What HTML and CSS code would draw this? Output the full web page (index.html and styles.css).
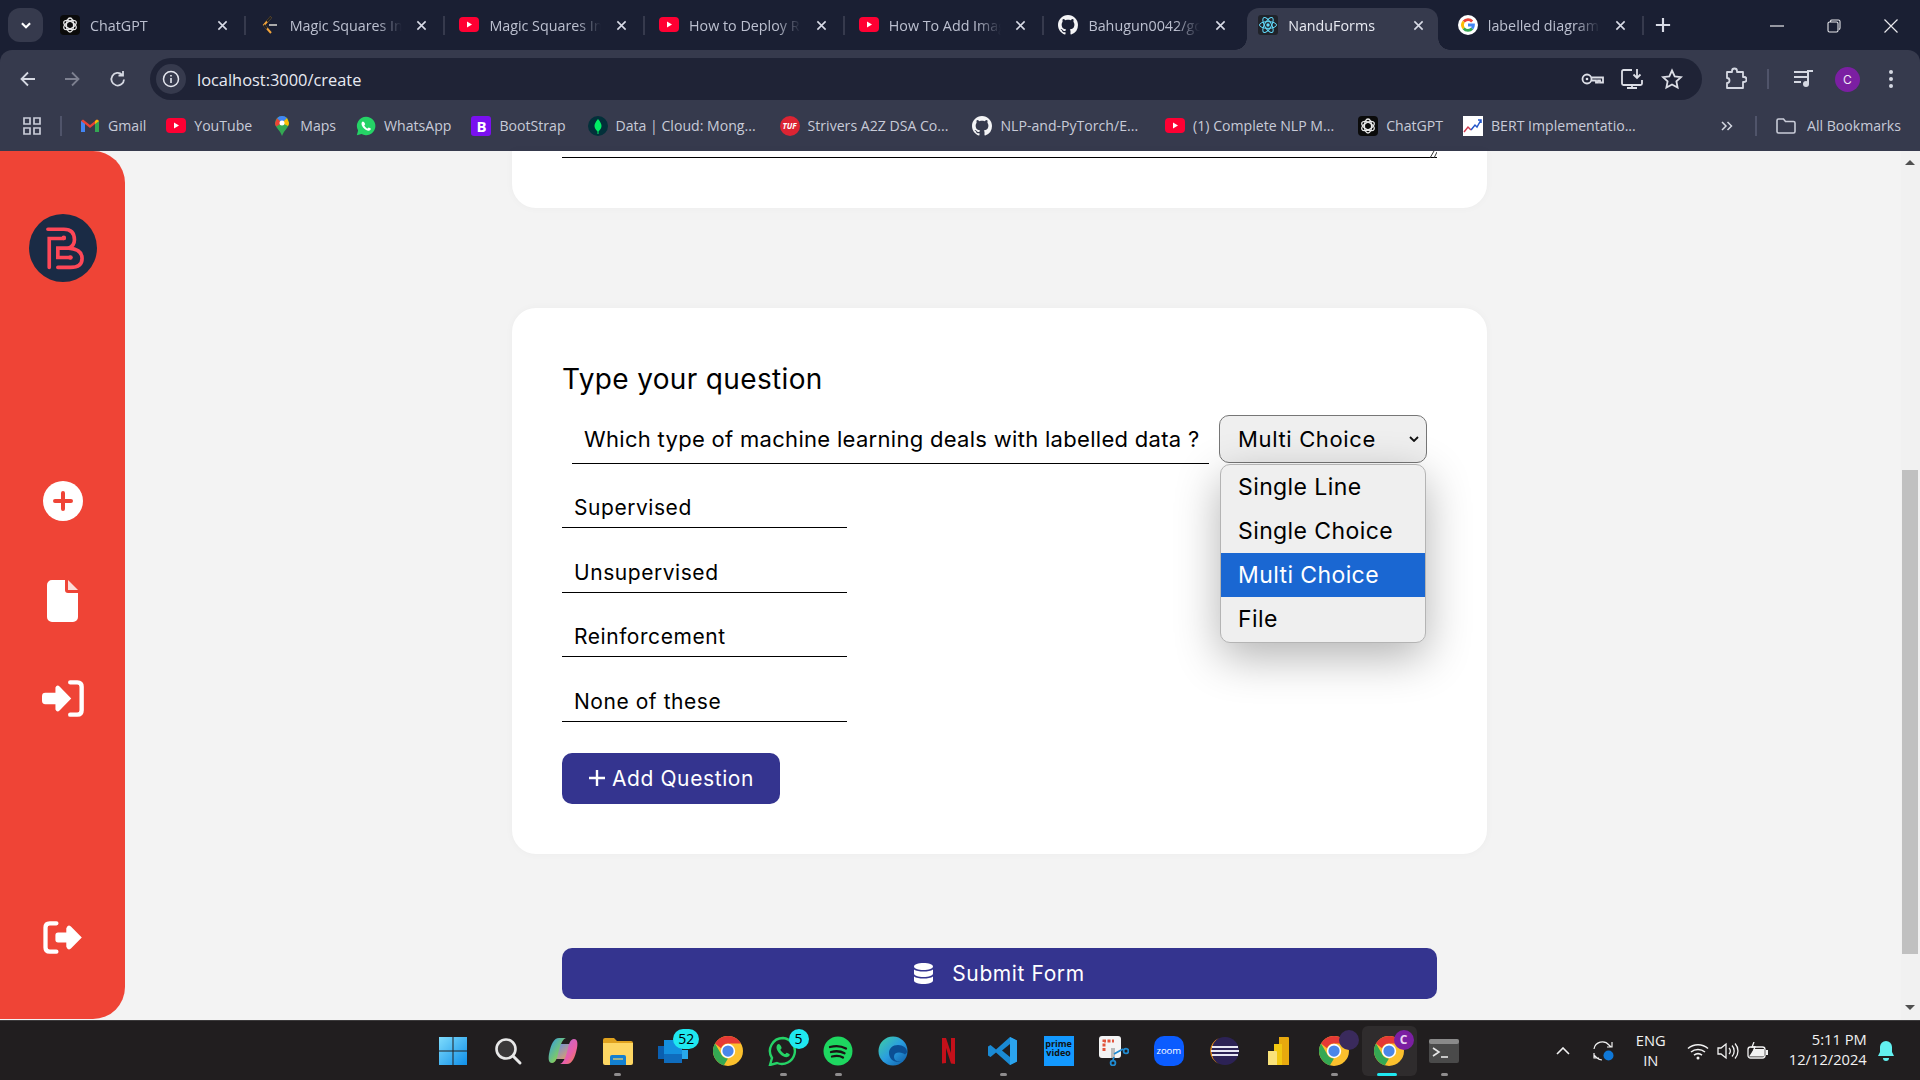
FILE: index.html
```html
<!DOCTYPE html>
<html lang="en">
<head>
    <meta charset="UTF-8">
    <meta name="viewport" content="width=device-width, initial-scale=1.0">
    <title>NanduForms</title>
    <link rel="stylesheet" href="styles.css">
</head>
<body>
    <svg class="defs" aria-hidden="true">
        <symbol id="gpt" viewBox="0 0 20 20">
            <rect width="20" height="20" rx="4" fill="#0b0b0b"/>
            <g fill="none" stroke="#e8e8e8" stroke-width="1.3">
                <ellipse cx="10" cy="10" rx="3.6" ry="7"/>
                <ellipse cx="10" cy="10" rx="3.6" ry="7" transform="rotate(60 10 10)"/>
                <ellipse cx="10" cy="10" rx="3.6" ry="7" transform="rotate(120 10 10)"/>
            </g>
        </symbol>
        <symbol id="leet" viewBox="0 0 20 20">
            <path d="M11 2 4 10l7 8" fill="none" stroke="#f2a33a" stroke-width="2"/>
            <path d="M11 2 7 6.500M4 10l3 3.500" fill="none" stroke="#222" stroke-width="2"/>
            <path d="M9 10h8" stroke="#aaa" stroke-width="2"/>
        </symbol>
        <symbol id="yt" viewBox="0 0 20 20">
            <rect y="2" width="20" height="15" rx="4" fill="#ff0033"/>
            <path d="M8 6.500v6l5-3z" fill="#fff"/>
        </symbol>
        <symbol id="gh" viewBox="0 0 16 16">
            <path fill="#f4f4f6" d="M8 0C3.58 0 0 3.58 0 8c0 3.54 2.29 6.530 5.470 7.590.4.070.55-.17.55-.38 0-.19-.01-.82-.01-1.490-2.010.37-2.530-.49-2.690-.94-.09-.23-.48-.94-.82-1.130-.28-.15-.68-.52-.01-.53.63-.01 1.080.58 1.230.82.72 1.210 1.870.87 2.330.66.07-.52.28-.87.51-1.070-1.780-.2-3.640-.89-3.640-3.950 0-.87.31-1.590.82-2.150-.08-.2-.36-1.020.08-2.120 0 0 .67-.21 2.200.82.64-.18 1.320-.27 2-.27s1.360.09 2 .27c1.530-1.040 2.200-.82 2.200-.82.44 1.100.16 1.920.08 2.120.51.56.82 1.270.82 2.150 0 3.070-1.870 3.750-3.650 3.950.29.25.54.73.54 1.480 0 1.070-.01 1.930-.01 2.200 0 .21.15.46.55.38A8.013 8.013 0 0 0 16 8c0-4.420-3.580-8-8-8z"/>
        </symbol>
        <symbol id="react" viewBox="0 0 20 20">
            <rect width="20" height="20" rx="3" fill="#20232a"/>
            <circle cx="10" cy="10" r="1.700" fill="#61dafb"/>
            <g fill="none" stroke="#61dafb" stroke-width="1">
                <ellipse cx="10" cy="10" rx="8.500" ry="3.400"/>
                <ellipse cx="10" cy="10" rx="8.500" ry="3.400" transform="rotate(60 10 10)"/>
                <ellipse cx="10" cy="10" rx="8.500" ry="3.400" transform="rotate(120 10 10)"/>
            </g>
        </symbol>
        <symbol id="google" viewBox="0 0 24 24">
            <circle cx="12" cy="12" r="12" fill="#fff"/>
            <g fill="none" stroke-width="3.400">
                <path stroke="#ea4335" d="M6.900 8A6.500 6.500 0 0 1 17 7.800"/>
                <path stroke="#fbbc05" d="M6.900 8a6.500 6.500 0 0 0 0 8"/>
                <path stroke="#34a853" d="M6.900 16A6.500 6.500 0 0 0 17 16.200"/>
                <path stroke="#4285f4" d="M17 16.200A6.500 6.500 0 0 0 18.500 12H12"/>
            </g>
        </symbol>
        <symbol id="chrome" viewBox="0 0 48 48">
            <circle cx="24" cy="24" r="24" fill="#fbc02d"/>
            <path fill="#e53935" d="M24 0a24 24 0 0 1 20.800 12H24a12 12 0 0 0-11.200 7.700L3.200 12A24 24 0 0 1 24 0z"/>
            <path fill="#34a853" d="M3.200 12l10.400 18a12 12 0 0 0 10.400 6l-6.800 11A24 24 0 0 1 3.200 12z"/>
            <circle cx="24" cy="24" r="11.500" fill="#fff"/>
            <circle cx="24" cy="24" r="9" fill="#4a86e8"/>
        </symbol>
        <symbol id="wa" viewBox="0 0 24 24">
            <path fill="#25d366" d="M12 1a11 11 0 0 0-9.500 16.500L1 23l5.700-1.500A11 11 0 1 0 12 1z"/>
            <path fill="#fff" d="M8.300 6.500c-.5 0-1.700 1-1.700 2.800 0 3.500 4.700 8.300 8.500 8.300 1.700 0 2.800-1.300 2.800-2.200 0-.4-2.300-1.600-2.700-1.600-.5 0-.9 1.200-1.400 1.200-.9 0-3.800-2.700-3.800-3.600 0-.5 1-1 1-1.400 0-.5-1.100-3.500-2.700-3.500z"/>
        </symbol>
        <symbol id="plus-mark" viewBox="0 0 18 18">
            <path d="M9 1v16M1 9h16" fill="none" stroke="currentColor" stroke-width="2.400"/>
        </symbol>
        <symbol id="x" viewBox="0 0 12 12">
            <path d="M1.500 1.500l9 9m0-9l-9 9" fill="none" stroke="currentColor" stroke-width="1.700"/>
        </symbol>
    </svg>

    <div class="tabstrip">
        <button class="tab-search"><svg viewBox="0 0 12 12"><path d="M2.500 4.500 6 8l3.500-3.500" fill="none" stroke="#fff" stroke-width="1.800"/></svg></button>
        <div class="tab"><svg class="fav"><use href="#gpt"/></svg><span class="tab-title">ChatGPT</span><svg class="tab-x"><use href="#x"/></svg></div>
        <div class="tab"><svg class="fav"><use href="#leet"/></svg><span class="tab-title">Magic Squares In</span><svg class="tab-x"><use href="#x"/></svg></div>
        <div class="tab"><svg class="fav"><use href="#yt"/></svg><span class="tab-title">Magic Squares In</span><svg class="tab-x"><use href="#x"/></svg></div>
        <div class="tab"><svg class="fav"><use href="#yt"/></svg><span class="tab-title">How to Deploy R</span><svg class="tab-x"><use href="#x"/></svg></div>
        <div class="tab"><svg class="fav"><use href="#yt"/></svg><span class="tab-title">How To Add Image</span><svg class="tab-x"><use href="#x"/></svg></div>
        <div class="tab no-sep"><svg class="fav"><use href="#gh"/></svg><span class="tab-title">Bahugun0042/gc</span><svg class="tab-x"><use href="#x"/></svg></div>
        <div class="tab active"><svg class="fav"><use href="#react"/></svg><span class="tab-title">NanduForms</span><svg class="tab-x"><use href="#x"/></svg></div>
        <div class="tab"><svg class="fav"><use href="#google"/></svg><span class="tab-title">labelled diagram</span><svg class="tab-x"><use href="#x"/></svg></div>
        <svg class="new-tab"><use href="#plus-mark"/></svg>
        <div class="win-btns">
            <svg viewBox="0 0 14 14"><path d="M0 7h14" stroke="#e8e8ec" stroke-width="1.200"/></svg>
            <svg viewBox="0 0 14 14"><path d="M3.500 2.500V2a1.500 1.500 0 0 1 1.500-1h6.500A1.500 1.500 0 0 1 13 2.500V9a1.500 1.500 0 0 1-1 1.400M2.500 3h7A1.500 1.500 0 0 1 11 4.500v7A1.500 1.500 0 0 1 9.500 13h-7A1.500 1.500 0 0 1 1 11.500v-7A1.500 1.500 0 0 1 2.500 3z" fill="none" stroke="#e8e8ec" stroke-width="1.100"/></svg>
            <svg viewBox="0 0 14 14"><path d="M.5.500l13 13m0-13l-13 13" stroke="#e8e8ec" stroke-width="1.200"/></svg>
        </div>
    </div>

    <div class="toolbar">
        <svg class="nav-ico" viewBox="0 0 20 20"><path d="M17 10H4m6-6.500L3.500 10l6.500 6.500" fill="none" stroke="#d5d8e2" stroke-width="1.800"/></svg>
        <svg class="nav-ico" viewBox="0 0 20 20"><path d="M3 10h13M10 3.500l6.500 6.500-6.500 6.500" fill="none" stroke="#7d8090" stroke-width="1.800"/></svg>
        <svg class="nav-ico reload" viewBox="0 0 20 20"><path d="M16 10.500a6.300 6.300 0 1 1-1.800-4.700M15 2v4.500h-4.500" fill="none" stroke="#d5d8e2" stroke-width="1.800"/></svg>
        <div class="omnibox">
            <span class="site-chip"><svg viewBox="0 0 18 18"><circle cx="9" cy="9" r="7.500" fill="none" stroke="#e4e6ee" stroke-width="1.500"/><path d="M9 8v5M9 5v1.600" stroke="#e4e6ee" stroke-width="1.600"/></svg></span>
            <span class="url">localhost:3000/create</span>
            <span class="omni-right">
                <svg class="omni-ico" viewBox="0 0 24 24"><circle cx="7" cy="12" r="4.500" fill="none" stroke="#dcdee6" stroke-width="1.800"/><circle cx="7" cy="12" r="1.300" fill="#dcdee6"/><path d="M11.500 10.500H23v5h-3v-2h-2v2h-2v-2h-4.500" fill="none" stroke="#dcdee6" stroke-width="1.800"/></svg>
                <svg class="omni-ico" viewBox="0 0 24 24"><path d="M12 3H3.500A1.500 1.500 0 0 0 2 4.500v12A1.500 1.500 0 0 0 3.500 18h17a1.500 1.500 0 0 0 1.500-1.500V13M7 21h10M12 18v3" fill="none" stroke="#dcdee6" stroke-width="1.800"/><path d="M17 2v9m-3.500-3.500L17 11l3.500-3.500" fill="none" stroke="#dcdee6" stroke-width="1.800"/></svg>
                <svg class="omni-ico" viewBox="0 0 24 24"><path d="M12 3.500l2.700 5.800 6.300.8-4.600 4.300 1.200 6.200L12 17.500l-5.600 3.100 1.200-6.200L3 10.100l6.300-.8z" fill="none" stroke="#dcdee6" stroke-width="1.800"/></svg>
            </span>
        </div>
        <svg class="ext-ico" viewBox="0 0 24 24"><path d="M4 5h5V4a2.500 2.500 0 0 1 5 0v1h6v5h1a2.500 2.500 0 0 1 0 5h-1v6H4v-5a2.500 2.500 0 0 0 0-5z" fill="none" stroke="#d5d8e2" stroke-width="1.800" stroke-linejoin="round"/></svg>
        <span class="tool-sep"></span>
        <svg class="media-ico" viewBox="0 0 22 20"><path d="M1 4h13M1 9h13M1 14h7" stroke="#d5d8e2" stroke-width="2"/><path d="M15 16V3h5" fill="none" stroke="#d5d8e2" stroke-width="2"/><circle cx="13" cy="16" r="3" fill="#d5d8e2"/></svg>
        <span class="avatar">C</span>
        <svg class="kebab" viewBox="0 0 6 20"><circle cx="3" cy="3" r="2" fill="#d5d8e2"/><circle cx="3" cy="10" r="2" fill="#d5d8e2"/><circle cx="3" cy="17" r="2" fill="#d5d8e2"/></svg>
    </div>

    <div class="bookmarks">
        <svg class="apps" viewBox="0 0 18 18"><path d="M1 1h6v6H1zM11 1h6v6h-6zM1 11h6v6H1zM11 11h6v6h-6z" fill="none" stroke="#c9ccd8" stroke-width="1.700"/></svg>
        <span class="bm-sep"></span>
        <div class="bm-list">
            <span class="bm"><svg class="fav" viewBox="0 0 20 20"><path d="M1 5v11h4V8l5 4 5-4v8h4V5l-2-1.500L10 9 3 3.500z" fill="#ea4335"/><path d="M1 5v11h4V8z" fill="#4285f4"/><path d="M15 8v8h4V5z" fill="#34a853"/><path d="M19 5l-2-1.500L15 5v3z" fill="#fbbc05"/></svg>Gmail</span>
            <span class="bm"><svg class="fav"><use href="#yt"/></svg>YouTube</span>
            <span class="bm"><svg class="fav" viewBox="0 0 20 20"><path d="M10 0a7 7 0 0 0-7 7c0 4.500 5 7 7 13 2-6 7-8.500 7-13a7 7 0 0 0-7-7z" fill="#34a853"/><path d="M5 2.200A7 7 0 0 1 15 2L10 7z" fill="#4285f4"/><path d="M5 2.200 3 7c0 1.500.5 2.500 1.200 3.500L10 7z" fill="#ea4335"/><path d="M15 2l2 5c0 1-.4 2-1 3L10 7z" fill="#fbbc05"/><circle cx="10" cy="7" r="2.500" fill="#fff"/></svg>Maps</span>
            <span class="bm"><svg class="fav"><use href="#wa"/></svg>WhatsApp</span>
            <span class="bm"><span class="bs-ico">B</span>BootStrap</span>
            <span class="bm bm-gap-s"><svg class="fav" viewBox="0 0 20 20"><circle cx="10" cy="10" r="10" fill="#02303a"/><path d="M10 3c2.500 3 3.500 5 3.500 7S12 14 10.500 15.500V18h-1v-2.500C8 14 6.500 12 6.500 10S7.500 6 10 3z" fill="#00ed64"/></svg>Data | Cloud: Mong...</span>
            <span class="bm bm-gap-m"><span class="tuf-ico">TUF</span>Strivers A2Z DSA Co...</span>
            <span class="bm bm-gap-m"><svg class="fav"><use href="#gh"/></svg>NLP-and-PyTorch/E...</span>
            <span class="bm bm-gap-l"><svg class="fav"><use href="#yt"/></svg>(1) Complete NLP M...</span>
            <span class="bm bm-gap-m"><svg class="fav"><use href="#gpt"/></svg>ChatGPT</span>
            <span class="bm"><svg class="fav" viewBox="0 0 20 20"><rect width="20" height="20" fill="#fff"/><path d="M1 16l4-5 3 3" fill="none" stroke="#d23c4f" stroke-width="1.500"/><path d="M8 14l4-5 2 2 4-7m-3 0h3v3" fill="none" stroke="#2456c8" stroke-width="1.500"/></svg>BERT Implementatio...</span>
        </div>
        <svg class="bm-more" viewBox="0 0 12 10"><path d="M1 1l4 4-4 4M6.500 1l4 4-4 4" fill="none" stroke="#d5d8e2" stroke-width="1.500"/></svg>
        <span class="bm-sep sep-right"></span>
        <span class="bm all-bm"><svg class="fav" viewBox="0 0 20 16"><path d="M1 2.500A1.500 1.500 0 0 1 2.500 1h5l2 2.500h8A1.500 1.500 0 0 1 19 5v8.500a1.500 1.500 0 0 1-1.500 1.500h-15A1.500 1.500 0 0 1 1 13.500z" fill="none" stroke="#c9ccd8" stroke-width="1.600"/></svg>All Bookmarks</span>
    </div>

    <div class="app">
        <aside class="sidebar">
            <svg class="logo" viewBox="85 194 205 205">
                <circle cx="187.500" cy="296.500" r="102.500" fill="#1a2b45"/>
                <g fill="none" stroke="#ff4757" stroke-width="11" stroke-linecap="round">
                    <path d="M142 240H190Q222 240 222 272Q222 290 205 297H172V325H210"/>
                    <path d="M205 297Q245 300 245 328Q245 355 210 355H172"/>
                    <path d="M146 355V268H190"/>
                </g>
                <circle cx="190" cy="266" r="7" fill="#ff4757"/>
                <circle cx="210" cy="325" r="7" fill="#ff4757"/>
            </svg>
            <svg class="side-plus" viewBox="0 0 40 40"><circle cx="20" cy="20" r="20" fill="#fff"/><path d="M20 12v16M12 20h16" stroke="#ef4436" stroke-width="4" stroke-linecap="round"/></svg>
            <svg class="side-file" viewBox="0 0 31 42"><path d="M5 0H18V10a3 3 0 0 0 3 3H31V37a5 5 0 0 1-5 5H5a5 5 0 0 1-5-5V5a5 5 0 0 1 5-5Z" fill="#fff"/><path d="M21 0 31 10H21Z" fill="#fbdcd8"/></svg>
            <svg class="side-in" viewBox="125 360 125 110"><path d="M135 398H165V382Q170 372 178 380L212 415L178 450Q170 458 165 448V432H135Q125 432 125 422V408Q125 398 135 398Z" fill="#fff"/><path d="M209 367H230Q243 367 243 380V450Q243 463 230 463H209" fill="none" stroke="#fff" stroke-width="13" stroke-linecap="round"/></svg>
            <svg class="side-out" viewBox="130 1083 117 100"><path d="M170 1090H150Q137 1090 137 1103V1163Q137 1176 150 1176H170" fill="none" stroke="#fff" stroke-width="13" stroke-linecap="round"/><path d="M175 1118H200V1105Q205 1092 214 1100L247 1133L214 1166Q205 1174 200 1161V1148H175Q167 1148 167 1140V1126Q167 1118 175 1118Z" fill="#fff"/></svg>
        </aside>

        <main class="content">
            <section class="card card-cut">
                <div class="cut-line"><svg class="grip" viewBox="0 0 10 7"><path d="M3 7l4-7M7 7l3-6" stroke="#333" stroke-width="1"/></svg></div>
            </section>

            <section class="card question-card">
                <h2>Type your question</h2>
                <div class="question-row">
                    <input class="question-input" type="text" value="Which type of machine learning deals with labelled data ?">
                    <div class="type-wrap">
                        <select class="type-select">
                            <option selected>Multi Choice</option>
                        </select>
                        <svg class="type-chev" viewBox="0 0 10 6"><path d="M1 1l4 4 4-4" fill="none" stroke="#111" stroke-width="1.800"/></svg>
                        <ul class="type-menu">
                            <li>Single Line</li>
                            <li>Single Choice</li>
                            <li class="picked">Multi Choice</li>
                            <li>File</li>
                        </ul>
                    </div>
                </div>
                <div class="options">
                    <input class="option-input" type="text" value="Supervised">
                    <input class="option-input" type="text" value="Unsupervised">
                    <input class="option-input" type="text" value="Reinforcement">
                    <input class="option-input" type="text" value="None of these">
                </div>
                <button class="btn add-btn" type="button"><svg class="btn-plus"><use href="#plus-mark"/></svg>Add Question</button>
            </section>

            <button class="btn submit-btn" type="button">
                <svg class="db-ico" viewBox="0 0 19 21"><path d="M0 3.500C0 1.500 4.300 0 9.500 0S19 1.500 19 3.500 14.700 7 9.500 7 0 5.500 0 3.500zM0 6.500C2 8 5.500 8.600 9.500 8.600S17 8 19 6.500v4C19 12.500 14.700 14 9.500 14S0 12.500 0 10.500zM0 13.500c2 1.500 5.500 2.100 9.500 2.100s7.500-.6 9.500-2.100v4c0 2-4.300 3.500-9.500 3.500S0 19.500 0 17.500z" fill="#fff"/></svg>
                Submit Form
            </button>
        </main>

        <div class="scrollbar">
            <svg class="sb-arrow" viewBox="0 0 10 5"><path d="M0 5 5 0l5 5z" fill="#505050"/></svg>
            <div class="sb-thumb"></div>
            <svg class="sb-arrow" viewBox="0 0 10 5"><path d="M0 0h10L5 5z" fill="#505050"/></svg>
        </div>
    </div>

    <footer class="taskbar">
        <div class="task-icons">
            <span class="task"><svg viewBox="0 0 30 30"><defs><linearGradient id="win" x1="0" y1="0" x2="1" y2="1"><stop offset="0" stop-color="#7fdcfc"/><stop offset="1" stop-color="#0f8fe8"/></linearGradient></defs><path fill="url(#win)" d="M1 1h13.500v13.500H1zM15.500 1H29v13.500H15.500zM1 15.500h13.500V29H1zM15.500 15.500H29V29H15.500z"/></svg></span>
            <span class="task"><svg viewBox="0 0 30 30"><circle cx="13" cy="13" r="9.500" fill="#3a3839" stroke="#e8e8e8" stroke-width="2.600"/><path d="M20 20l7 7" stroke="#e8e8e8" stroke-width="3" stroke-linecap="round"/></svg></span>
            <span class="task"><svg viewBox="0 0 30 30"><defs><linearGradient id="cop-a" x1="0" y1="0" x2="1" y2="1"><stop offset="0" stop-color="#2d9bea"/><stop offset=".6" stop-color="#7cc96a"/><stop offset="1" stop-color="#f2c53c"/></linearGradient><linearGradient id="cop-b" x1="0" y1="0" x2="1" y2="1"><stop offset="0" stop-color="#b06be0"/><stop offset=".6" stop-color="#e85fa8"/><stop offset="1" stop-color="#f2853c"/></linearGradient><linearGradient id="cop-c" x1="0" y1="0" x2="1" y2="1"><stop offset="0" stop-color="#5a8fe8"/><stop offset="1" stop-color="#f0a05a"/></linearGradient></defs><path fill="url(#cop-c)" d="M9 8h14l-3 15H6z"/><path fill="url(#cop-a)" d="M11 2h7c-3 1-5 5-7 12-2 8-3 13-7 13-3 0-4-3-3-9C3 8 6 2 11 2z"/><path fill="url(#cop-b)" d="M19 28h-7c3-1 5-5 7-12 2-8 3-13 7-13 3 0 4 3 3 9-2 10-5 16-10 16z"/></svg></span>
            <span class="task dot"><svg viewBox="0 0 30 30"><path d="M0 4a2 2 0 0 1 2-2h9l3 3h14a2 2 0 0 1 2 2v5H0z" fill="#e0a21e"/><path d="M0 7h30v20a2 2 0 0 1-2 2H2a2 2 0 0 1-2-2z" fill="#fdd663"/><path d="M9 19h12a2 2 0 0 1 2 2v8H7v-8a2 2 0 0 1 2-2z" fill="#1380d0"/><path d="M10 23h10" stroke="#fdd663" stroke-width="1.200"/></svg></span>
            <span class="task"><svg viewBox="0 0 30 30"><path d="M0 10h6v13H0z" fill="#0a5fb0"/><path d="M6 4h18v23H6z" fill="#1490df"/><path d="M6 18h18v9H6z" fill="#0f6cbd"/><path d="M24 14h6v9h-6z" fill="#28a8ea"/></svg><span class="task-badge wide">52</span></span>
            <span class="task"><svg viewBox="0 0 30 30"><use href="#chrome"/></svg></span>
            <span class="task dot"><svg viewBox="0 0 30 30"><path d="M15 2A13 13 0 0 0 4 22L2 29l7-2A13 13 0 1 0 15 2z" fill="none" stroke="#25d366" stroke-width="2.400"/><path fill="#25d366" d="M10.500 8c-.6 0-2 1.200-2 3.300 0 4.200 5.600 9.900 10.100 9.900 2 0 3.300-1.500 3.300-2.600 0-.5-2.700-1.900-3.200-1.900-.6 0-1.100 1.400-1.700 1.400-1.100 0-4.500-3.200-4.500-4.300 0-.6 1.200-1.200 1.200-1.700C13.700 11.600 12.400 8 10.500 8z"/></svg><span class="task-badge">5</span></span>
            <span class="task dot"><svg viewBox="0 0 30 30"><circle cx="15" cy="15" r="14.500" fill="#1ed760"/><path d="M7 11c6-1.700 11-1.300 16 1.500M8 16c5-1.300 9.500-1 13.500 1.300M9 20.500c4-1 8-.8 11 1" fill="none" stroke="#191414" stroke-width="2.300" stroke-linecap="round"/></svg></span>
            <span class="task"><svg viewBox="0 0 30 30"><defs><linearGradient id="edge" x1="0" y1="0" x2="1" y2="1"><stop offset="0" stop-color="#3fd0a0"/><stop offset=".5" stop-color="#2a9de0"/><stop offset="1" stop-color="#0c59a4"/></linearGradient></defs><circle cx="15" cy="15" r="14.500" fill="url(#edge)"/><path d="M29 16c0-4-4-7-9-7-5.500 0-9 3.500-9 8 0 5 4 9 9 9 1 0 2 0 3-.5-2 .5-7 0-7-5 0-2.500 2-4 5-4s5 1 6 2c1-1 2-2 2-2.500z" fill="#0b4f94"/></svg></span>
            <span class="task"><svg viewBox="0 0 30 30"><path d="M9 2h4l5 15V2h4v26l-4-.5L13 12v15l-4 .5z" fill="#c4101a"/></svg></span>
            <span class="task dot"><svg viewBox="0 0 30 30"><path d="M22 1l7 3.500v21L22 29 8 16.500 2.500 21 0 19.500V10.500L2.500 9 8 13.500z" fill="#1a8ad4"/><path d="M22 8l-8 6.500L22 21z" fill="#211e1f"/><path d="M22 1l7 3.500v21L22 29z" fill="#2ba4ee"/></svg></span>
            <span class="task"><span class="prime">prime<br>video</span></span>
            <span class="task"><svg viewBox="0 0 30 30"><rect width="22" height="22" rx="3" fill="#f4f4f4"/><path d="M5 15V5h10" fill="none" stroke="#e2553d" stroke-width="3" stroke-dasharray="3 1.500"/><rect x="12" y="12" width="4" height="10" fill="#bbb"/><path d="M15 18l9-5M15 21l-1 3" stroke="#1f8ad0" stroke-width="1.800"/><circle cx="27" cy="15" r="2.400" fill="none" stroke="#1f8ad0" stroke-width="1.800"/><circle cx="14" cy="27" r="2.400" fill="none" stroke="#1f8ad0" stroke-width="1.800"/></svg></span>
            <span class="task"><span class="zoom-ico">zoom</span></span>
            <span class="task"><svg viewBox="0 0 30 30"><circle cx="16" cy="15" r="14" fill="#2c2255"/><path d="M10 2A14 14 0 0 0 10 28 15 15 0 0 1 10 2z" fill="#f7941e"/><path d="M3 11h26M2 15h28M3 19h26" stroke="#e8e8f4" stroke-width="1.800"/></svg></span>
            <span class="task"><svg viewBox="0 0 30 30"><path d="M15 1h9a1 1 0 0 1 1 1v27H15z" fill="#e8a90e"/><path d="M10 8h8v21h-8z" fill="#f2c811"/><path d="M4 15h8a1 1 0 0 1 1 1v13H4z" fill="#f9e27a"/></svg></span>
            <span class="task dot"><svg viewBox="0 0 30 30"><use href="#chrome"/></svg><span class="task-blob"></span></span>
            <span class="task current"><svg viewBox="0 0 30 30"><use href="#chrome"/></svg><span class="task-avatar">C</span></span>
            <span class="task dot"><svg viewBox="0 0 30 24"><rect width="30" height="24" rx="2" fill="#4a4a4a"/><rect width="30" height="5" rx="2" fill="#8a8a8a"/><path d="M4 9l6 4-6 4" fill="none" stroke="#e6e6e6" stroke-width="1.600"/><path d="M12 18h7" stroke="#e6e6e6" stroke-width="1.600"/></svg></span>
        </div>
        <div class="tray">
            <svg class="tray-chev" viewBox="0 0 14 8"><path d="M1 7l6-6 6 6" fill="none" stroke="#f2f2f2" stroke-width="1.600"/></svg>
            <span class="tray-sync"><svg viewBox="0 0 22 22"><path d="M1 9a8.500 8.500 0 0 1 15-4l2 2m1-5v5h-5M20 14M1 15l3 3a8 8 0 0 0 5 2M1 13v5h5" fill="none" stroke="#f0f0f0" stroke-width="1.200"/><circle cx="15.500" cy="15.500" r="5" fill="#0f78d8"/></svg></span>
            <span class="lang">ENG<br>IN</span>
            <svg class="tray-wifi" viewBox="0 0 22 18"><path d="M1 6.500c5.500-5 14.500-5 20 0M4 10c4-3.500 10-3.500 14 0M7 13.200c2.300-1.800 5.700-1.800 8 0" fill="none" stroke="#f2f2f2" stroke-width="1.500"/><circle cx="11" cy="16" r="1.500" fill="#f2f2f2"/></svg>
            <svg class="tray-vol" viewBox="0 0 22 18"><path d="M1 6v6h3l5 4V2L4 6z" fill="none" stroke="#f2f2f2" stroke-width="1.300"/><path d="M12 6a4 4 0 0 1 0 6M15 3.500a8 8 0 0 1 0 11M18 1.500a11 11 0 0 1 0 15" fill="none" stroke="#f2f2f2" stroke-width="1.300"/></svg>
            <svg class="tray-bat" viewBox="0 0 22 18"><rect x="1" y="5" width="17" height="11" rx="2.500" fill="none" stroke="#f2f2f2" stroke-width="1.300"/><path d="M2 14.500l5-7.500h10v7.500z" fill="#f2f2f2"/><path d="M19 8h2v5h-2z" fill="#f2f2f2"/><path d="M7 0l-2 5h3L6 10" fill="none" stroke="#f2f2f2" stroke-width="1.300"/></svg>
            <span class="clock">5:11 PM<br>12/12/2024</span>
            <svg class="tray-bell" viewBox="0 0 16 20"><path d="M8 0a6 6 0 0 0-6 6v5l-2 4h16l-2-4V6a6 6 0 0 0-6-6z" fill="#62f0f0"/><path d="M5 17h6a3 3 0 0 1-6 0z" fill="#62f0f0"/></svg>
        </div>
    </footer>
</body>
</html>
```

FILE: styles.css
```css
* {
    box-sizing: border-box;
}
body {
    margin: 0;
    width: 1920px;
    height: 1080px;
    overflow: hidden;
    display: flex;
    flex-direction: column;
    background-color: #1a1f33;
    font-family: Inter, "Liberation Sans", sans-serif;
}
.defs {
    display: none;
}

/* tab strip */
.tabstrip {
    height: 50px;
    flex: none;
    display: flex;
    align-items: flex-end;
    padding-left: 8px;
    background-color: #1a1f33;
    font-family: "Open Sans", sans-serif;
}
.tab-search {
    width: 35px;
    height: 34px;
    margin: 0 3px 8px 0;
    padding: 0;
    border: none;
    border-radius: 12px;
    background-color: #363a4d;
}
.tab-search svg {
    display: block;
    width: 14px;
    height: 14px;
    margin: auto;
}
.tab {
    position: relative;
    width: 199.7px;
    height: 42px;
    flex: none;
    display: flex;
    align-items: center;
    padding: 0 18px 8px 14px;
    color: #bcc0d0;
    font-size: 14.3px;
}
.tab::before {
    content: "";
    position: absolute;
    right: 0;
    top: 8px;
    height: 19px;
    width: 2px;
    background-color: #363a4d;
}
.tab.no-sep::before {
    display: none;
}
.tab.active {
    width: 191px;
    margin: 0 5.7px 0 3px;
    padding-left: 11px;
    padding-right: 14px;
    border-radius: 12px 12px 0 0;
    background-color: #363a4d;
    color: #e8eaf2;
}
.tab.active::before,
.tab.active::after {
    content: "";
    position: absolute;
    top: auto;
    bottom: 0;
    width: 12px;
    height: 12px;
}
.tab.active::before {
    left: -12px;
    right: auto;
    background: radial-gradient(circle at 0 0, transparent 11.5px, #363a4d 12px);
}
.tab.active::after {
    right: -12px;
    background: radial-gradient(circle at 100% 0, transparent 11.5px, #363a4d 12px);
}
.tab .fav {
    margin-right: 10px;
}
.fav {
    width: 20px;
    height: 20px;
    flex: none;
}
.tab-title {
    width: 112px;
    flex: none;
    overflow: hidden;
    white-space: nowrap;
    -webkit-mask-image: linear-gradient(to right, #000 78%, transparent);
    mask-image: linear-gradient(to right, #000 78%, transparent);
}
.tab-x {
    width: 11px;
    height: 11px;
    margin-left: auto;
    color: #d8dbe6;
}
.new-tab {
    width: 16px;
    height: 16px;
    margin: 0 0 17px 11px;
    color: #d8dbe6;
}
.win-btns {
    display: flex;
    margin: 0 0 17px auto;
    padding-right: 22px;
    gap: 43px;
}
.win-btns svg {
    width: 14px;
    height: 14px;
}

/* toolbar */
.toolbar {
    height: 50px;
    flex: none;
    display: flex;
    align-items: center;
    padding: 0 0 0 18px;
    border-radius: 12px 12px 0 0;
    background-color: #363a4d;
}
.nav-ico {
    width: 20px;
    height: 20px;
    margin-right: 24px;
    margin-top: 8px;
}
.reload {
    margin-left: 2px;
}
.omnibox {
    width: 1552px;
    height: 42px;
    margin: 8px 0 0 -2px;
    display: flex;
    align-items: center;
    padding: 0 18px 0 6px;
    border-radius: 21px;
    background-color: #1f2336;
}
.site-chip {
    width: 30px;
    height: 30px;
    display: flex;
    align-items: center;
    justify-content: center;
    border-radius: 50%;
    background-color: #363a4d;
}
.site-chip svg {
    width: 18px;
    height: 18px;
}
.url {
    margin-left: 11px;
    color: #e8eaf2;
    font-family: "Open Sans", sans-serif;
    font-size: 16.4px;
}
.omni-right {
    display: flex;
    margin-left: auto;
    gap: 16px;
}
.omni-ico {
    width: 24px;
    height: 24px;
}
.ext-ico {
    width: 24px;
    height: 24px;
    margin: 8px 0 0 21px;
}
.tool-sep {
    width: 2px;
    height: 20px;
    margin: 8px 0 0 20px;
    background-color: #50546a;
}
.media-ico {
    width: 22px;
    height: 20px;
    margin: 6px 0 0 24px;
}
.avatar {
    width: 25px;
    height: 25px;
    margin: 8px 0 0 20px;
    border-radius: 50%;
    background-color: #7b1fa2;
    color: #f0e6f5;
    font-size: 12px;
    line-height: 25px;
    text-align: center;
}
.kebab {
    width: 6px;
    height: 20px;
    margin: 8px 0 0 28px;
}

/* bookmarks */
.bookmarks {
    height: 51px;
    flex: none;
    display: flex;
    align-items: center;
    padding-left: 23px;
    background-color: #363a4d;
    color: #c8cbd8;
    font-family: "Open Sans", sans-serif;
    font-size: 14.1px;
}
.apps {
    width: 18px;
    height: 18px;
}
.bm-sep {
    width: 2px;
    height: 20px;
    margin-left: 19px;
    background-color: #50546a;
}
.bm-list {
    display: flex;
    gap: 20px;
    margin-left: 18px;
    width: 1633px;
}
.bm {
    display: flex;
    align-items: center;
    gap: 8px;
    white-space: nowrap;
}
.bm-gap-s {
    margin-left: 2px;
}
.bm-gap-m {
    margin-left: 4px;
}
.bm-gap-l {
    margin-left: 7px;
}
.bs-ico {
    width: 20px;
    height: 20px;
    border-radius: 3px;
    background-color: #7a10f0;
    color: #fff;
    font-size: 15px;
    font-weight: 700;
    line-height: 20px;
    text-align: center;
}
.tuf-ico {
    width: 20px;
    height: 20px;
    border-radius: 50%;
    background-color: #dc2433;
    color: #fff;
    font-size: 8px;
    font-style: italic;
    font-weight: 700;
    line-height: 20px;
    text-align: center;
}
.bm-more {
    width: 12px;
    height: 10px;
    margin-left: 8px;
}
.sep-right {
    margin-left: 22px;
}
.all-bm {
    margin-left: 19px;
    gap: 11px;
}

/* page */
.app {
    height: 869px;
    flex: none;
    display: flex;
    background-color: #f3f3f3;
}
.sidebar {
    width: 125px;
    height: 868px;
    flex: none;
    display: flex;
    flex-direction: column;
    align-items: center;
    border-radius: 0 32px 32px 0;
    background-color: #ef4436;
}
.logo {
    width: 68px;
    height: 68px;
    margin-top: 63px;
}
.side-plus {
    width: 40px;
    height: 40px;
    margin-top: 199px;
}
.side-file {
    width: 31px;
    height: 42px;
    margin-top: 59px;
}
.side-in {
    width: 42px;
    height: 37px;
    margin-top: 58px;
}
.side-out {
    width: 39px;
    height: 33px;
    margin-top: 204px;
}
.content {
    width: 1776px;
    flex: none;
    padding-left: 387px;
}
.card {
    width: 975px;
    background-color: #ffffff;
    border-radius: 24px;
    box-shadow: 0 0 8px rgba(0, 0, 0, 0.03);
}
.card-cut {
    height: 57px;
    padding: 0 50px;
    border-radius: 0 0 24px 24px;
}
.cut-line {
    height: 7px;
    border-bottom: 1px solid #000;
    display: flex;
    justify-content: flex-end;
}
.grip {
    width: 10px;
    height: 7px;
}
.question-card {
    height: 546px;
    margin-top: 100px;
    padding: 50px 50px 0;
}
h2 {
    margin: 0 0 15px;
    color: #000;
    font-size: 28px;
    font-weight: 400;
    letter-spacing: 0.35px;
    line-height: 42px;
}
.question-row {
    display: flex;
    height: 49px;
    padding-left: 10px;
}
input {
    font-family: Inter, "Liberation Sans", sans-serif;
    color: #000;
    border: none;
    outline: none;
    border-bottom: 1px solid #000;
    background: transparent;
}
.question-input {
    width: 637px;
    padding: 0 9px 1px 12px;
    font-size: 22px;
    letter-spacing: 0.3px;
}
.type-wrap {
    position: relative;
    width: 208px;
    margin-left: 10px;
}
.type-select {
    width: 208px;
    height: 48px;
    padding-left: 18px;
    border: 1px solid #767676;
    border-radius: 10px;
    background-color: #efefef;
    color: #000;
    font-family: Inter, "Liberation Sans", sans-serif;
    font-size: 22px;
    letter-spacing: 0.65px;
    -webkit-appearance: none;
    appearance: none;
}
.type-chev {
    position: absolute;
    left: 190px;
    top: 21px;
    width: 10px;
    height: 6px;
}
.type-menu {
    position: absolute;
    left: 1px;
    top: 49px;
    width: 206px;
    height: 179px;
    margin: 0;
    padding: 0;
    list-style: none;
    overflow: hidden;
    border: 1px solid #b4b4b4;
    border-radius: 10px;
    background-color: #efefef;
    box-shadow: 0 14px 45px rgba(0, 0, 0, 0.3);
    font-size: 23px;
    letter-spacing: 0.4px;
}
.type-menu li {
    height: 44px;
    padding-left: 17px;
    line-height: 44px;
}
.type-menu .picked {
    background-color: #1a67d2;
    color: #ffffff;
}
.options {
    display: flex;
    flex-direction: column;
    gap: 24.67px;
    margin-top: 24px;
}
.option-input {
    width: 285px;
    height: 40px;
    padding: 0 12px;
    font-size: 21px;
    letter-spacing: 0.55px;
}
.btn {
    display: flex;
    align-items: center;
    justify-content: center;
    border: none;
    background-color: #34348f;
    color: #ffffff;
    font-family: Inter, "Liberation Sans", sans-serif;
    font-size: 21px;
    letter-spacing: 0.6px;
    cursor: pointer;
}
.add-btn {
    width: 218px;
    height: 51px;
    margin-top: 31px;
    border-radius: 10px;
}
.btn-plus {
    width: 18px;
    height: 18px;
    margin-right: 6px;
}
.submit-btn {
    width: 875px;
    height: 51px;
    margin: 94px 0 0 50px;
    border-radius: 10px;
}
.db-ico {
    width: 19px;
    height: 21px;
    margin-right: 19px;
}
.scrollbar {
    width: 19px;
    flex: none;
    padding: 9px 2px 0 1px;
    background-color: #f1f1f1;
}
.sb-arrow {
    display: block;
    width: 10px;
    height: 5px;
    margin: 0 auto;
}
.sb-thumb {
    height: 484px;
    margin: 305px 0 51px;
    background-color: #c0c0c0;
}

/* taskbar */
.taskbar {
    height: 60px;
    flex: none;
    display: flex;
    align-items: center;
    border-top: 1px solid #3c3a3b;
    background-color: #211e1f;
    color: #f2f2f2;
    font-family: "Open Sans", sans-serif;
}
.task-icons {
    display: flex;
    margin-left: 425px;
}
.task {
    position: relative;
    width: 55.1px;
    height: 50px;
    display: flex;
    align-items: center;
    justify-content: center;
}
.task > svg {
    width: 30px;
    height: 30px;
}
.task.dot::after {
    content: "";
    position: absolute;
    left: 24px;
    bottom: 0;
    width: 7px;
    height: 3px;
    border-radius: 2px;
    background-color: #8f8d8e;
}
.task.current {
    border-radius: 6px;
    background-color: #2f2c2d;
}
.task.current::after {
    content: "";
    position: absolute;
    left: 15px;
    bottom: 0;
    width: 20px;
    height: 3px;
    border-radius: 2px;
    background-color: #1fe8f0;
}
.task-badge {
    position: absolute;
    left: 33px;
    top: 3px;
    width: 20px;
    height: 20px;
    border-radius: 50%;
    background-color: #1fe8f0;
    color: #000;
    font-size: 14px;
    line-height: 20px;
    text-align: center;
}
.task-badge.wide {
    left: 28px;
    width: 26px;
    border-radius: 10px;
}
.task-blob,
.task-avatar {
    position: absolute;
    left: 32px;
    top: 4px;
    width: 20px;
    height: 20px;
    border-radius: 50%;
}
.task-blob {
    background-color: #3a2a5c;
}
.task-avatar {
    background-color: #7b1fa2;
    color: #e9d5f2;
    font-size: 12px;
    font-weight: 700;
    line-height: 20px;
    text-align: center;
}
.prime {
    width: 30px;
    height: 30px;
    padding-top: 3px;
    background-color: #1399ff;
    color: #111;
    font-size: 9px;
    font-weight: 700;
    line-height: 9px;
    text-align: center;
}
.zoom-ico {
    width: 30px;
    height: 30px;
    border-radius: 10px;
    background-color: #0b5cff;
    color: #fff;
    font-size: 9.5px;
    line-height: 30px;
    text-align: center;
}
.tray {
    display: flex;
    align-items: center;
    margin-left: 84px;
}
.tray-chev {
    width: 14px;
    height: 8px;
}
.tray-sync svg {
    display: block;
    width: 22px;
    height: 22px;
    margin-left: 23px;
}
.lang {
    width: 40px;
    margin: 0 0 2px 16px;
    font-size: 14.7px;
    line-height: 20px;
    text-align: center;
}
.tray-wifi {
    width: 22px;
    height: 18px;
    margin-left: 16px;
}
.tray-vol {
    width: 22px;
    height: 18px;
    margin-left: 8px;
}
.tray-bat {
    width: 22px;
    height: 18px;
    margin-left: 8px;
}
.clock {
    width: 90px;
    margin: 0 0 4px 8px;
    font-size: 14.7px;
    line-height: 20px;
    text-align: right;
}
.tray-bell {
    width: 16px;
    height: 20px;
    margin-left: 11px;
}
```
